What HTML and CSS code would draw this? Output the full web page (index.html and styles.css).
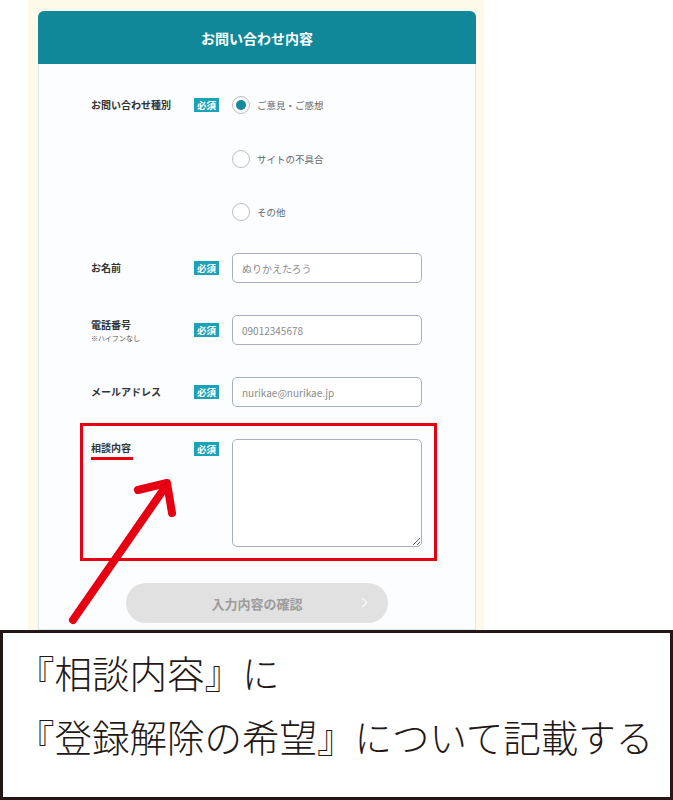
FILE: index.html
```html
<!DOCTYPE html>
<html lang="ja">
<head>
<meta charset="utf-8">
<title>お問い合わせ</title>
<link rel="stylesheet" href="styles.css">
</head>
<body>
<div class="stage">
  <div class="cream">
    <div class="card">
      <div class="card-head">お問い合わせ内容</div>
      <div class="card-body">
        <div class="row row-top">
          <div class="label label-radio">お問い合わせ種別</div>
          <div class="badge-cell badge-radio"><span class="badge">必須</span></div>
          <div class="radios">
            <label class="radio"><span class="circle checked"></span><span class="rtext">ご意見・ご感想</span></label>
            <label class="radio"><span class="circle"></span><span class="rtext">サイトの不具合</span></label>
            <label class="radio"><span class="circle"></span><span class="rtext">その他</span></label>
          </div>
        </div>
        <div class="row">
          <div class="label">お名前</div>
          <div class="badge-cell"><span class="badge">必須</span></div>
          <input class="field" type="text" placeholder="ぬりかえたろう">
        </div>
        <div class="row">
          <div class="label">電話番号<span class="sub">※ハイフンなし</span></div>
          <div class="badge-cell"><span class="badge">必須</span></div>
          <input class="field" type="text" placeholder="09012345678">
        </div>
        <div class="row">
          <div class="label">メールアドレス</div>
          <div class="badge-cell"><span class="badge">必須</span></div>
          <input class="field" type="text" placeholder="nurikae@nurikae.jp">
        </div>
        <div class="row row-top row-marked">
          <div class="label label-area"><span class="underlined">相談内容</span></div>
          <div class="badge-cell badge-area"><span class="badge">必須</span></div>
          <textarea class="area"></textarea>
        </div>
        <div class="btn-wrap">
          <button class="btn" type="button">入力内容の確認<span class="chev"></span></button>
        </div>
      </div>
    </div>
  </div>
  <svg class="arrow" width="673" height="630" viewBox="0 0 673 630">
    <g fill="none" stroke="#e60012" stroke-width="8" stroke-linecap="round" stroke-linejoin="round">
      <line x1="73" y1="620" x2="166" y2="486"/>
      <polyline points="138,490 167,483 172,513"/>
    </g>
  </svg>
</div>
<div class="note">
  <p>『相談内容』に</p>
  <p>『登録解除の希望』について記載する</p>
</div>
</body>
</html>
```
FILE: styles.css
```css
* { box-sizing: border-box; }
html, body { margin: 0; padding: 0; background: #fff; }
body {
  width: 673px;
  font-family: "Noto Sans CJK JP", "Noto Sans", sans-serif;
  color: #333;
}
.stage {
  position: relative;
  width: 673px;
  height: 630px;
  overflow: hidden;
}
.cream {
  margin-left: 28px;
  width: 456px;
  height: 100%;
  background: #fdfaea;
  padding: 11px 8px 0 10px;
}
.card {
  width: 438px;
  height: 100%;
}
.card-head {
  height: 53px;
  background: #108899;
  border-radius: 6px 6px 0 0;
  color: #fff;
  font-weight: 700;
  font-size: 14px;
  display: flex;
  align-items: center;
  justify-content: center;
  letter-spacing: 0;
}
.card-body {
  background: #fbfdfe;
  border: 1px solid #d8e8ee;
  border-top: none;
  height: calc(100% - 53px);
  padding: 32px 0 0 52px;
  display: flex;
  flex-direction: column;
  gap: 32px;
}
.row {
  display: grid;
  grid-template-columns: 103px 38px 190px;
  align-items: center;
  width: 331px;
}
.row-top { align-items: start; }
.label {
  font-size: 10px;
  font-weight: 700;
  line-height: 14px;
  color: #333;
  display: flex;
  flex-direction: column;
}
.sub {
  font-size: 7px;
  font-weight: 400;
  line-height: 10px;
  margin-top: 1px;
  color: #555;
}
.label-radio { margin-top: 2px; }
.badge-cell { display: flex; }
.badge-radio { margin-top: 2px; }
.badge {
  display: inline-block;
  width: 25px;
  height: 14px;
  background: #1ba2b7;
  color: #fff;
  font-size: 9.5px;
  font-weight: 700;
  line-height: 14px;
  text-align: center;
}
.radios {
  display: flex;
  flex-direction: column;
  gap: 35.5px;
}
.radio {
  display: flex;
  align-items: center;
  height: 18px;
}
.circle {
  width: 18px;
  height: 18px;
  border-radius: 50%;
  border: 1.5px solid #bdbdbd;
  background: #fff;
  display: flex;
  align-items: center;
  justify-content: center;
  flex-shrink: 0;
}
.circle.checked::after {
  content: "";
  width: 10px;
  height: 10px;
  border-radius: 50%;
  background: #128a9c;
}
.rtext {
  margin-left: 7px;
  font-size: 9.5px;
  color: #666;
}
.field {
  width: 190px;
  height: 30px;
  border: 1.5px solid #a4aec4;
  border-radius: 5px;
  background: #fff;
  padding: 0 9px;
  font-family: "Noto Sans CJK JP", "Noto Sans", sans-serif;
  font-size: 10px;
  color: #333;
  outline: none;
}
.field::placeholder { color: #8a8a8a; }
.row-marked { position: relative; }
.row-marked::before {
  content: "";
  position: absolute;
  left: -11px;
  top: -16px;
  right: -15px;
  bottom: -14px;
  border: 3px solid #e60012;
  pointer-events: none;
}
.label-area { margin-top: 2px; }
.underlined {
  display: inline-block;
  width: 42px;
  padding-bottom: 2px;
  border-bottom: 3px solid #e60012;
}
.badge-area { margin-top: 3px; }
.area {
  width: 190px;
  height: 108px;
  border: 1.5px solid #a4aec4;
  border-radius: 5px;
  background: #fff;
  resize: both;
  margin: 0;
  display: block;
  outline: none;
}
.btn-wrap {
  margin-left: -52px;
  margin-top: 4px;
  display: flex;
  justify-content: center;
}
.btn {
  position: relative;
  width: 262px;
  height: 40px;
  border: none;
  border-radius: 20px;
  background: #e1e1e1;
  color: #9c9c9c;
  font-family: "Noto Sans CJK JP", "Noto Sans", sans-serif;
  font-weight: 700;
  font-size: 13px;
  padding: 0;
}
.chev {
  position: absolute;
  right: 22px;
  top: 16px;
  width: 7px;
  height: 7px;
  border-top: 1.5px solid #fff;
  border-right: 1.5px solid #fff;
  transform: rotate(45deg);
}
.arrow {
  position: absolute;
  left: 0;
  top: 0;
  pointer-events: none;
}
.note {
  width: 673px;
  height: 170px;
  border: 3px solid #231815;
  background: #fff;
  padding: 7px 0 0 14px;
}
.note p {
  margin: 0;
  font-family: "Noto Sans CJK JP", sans-serif;
  font-weight: 300;
  font-size: 37.5px;
  line-height: 64px;
  color: #231815;
  white-space: nowrap;
}
```
